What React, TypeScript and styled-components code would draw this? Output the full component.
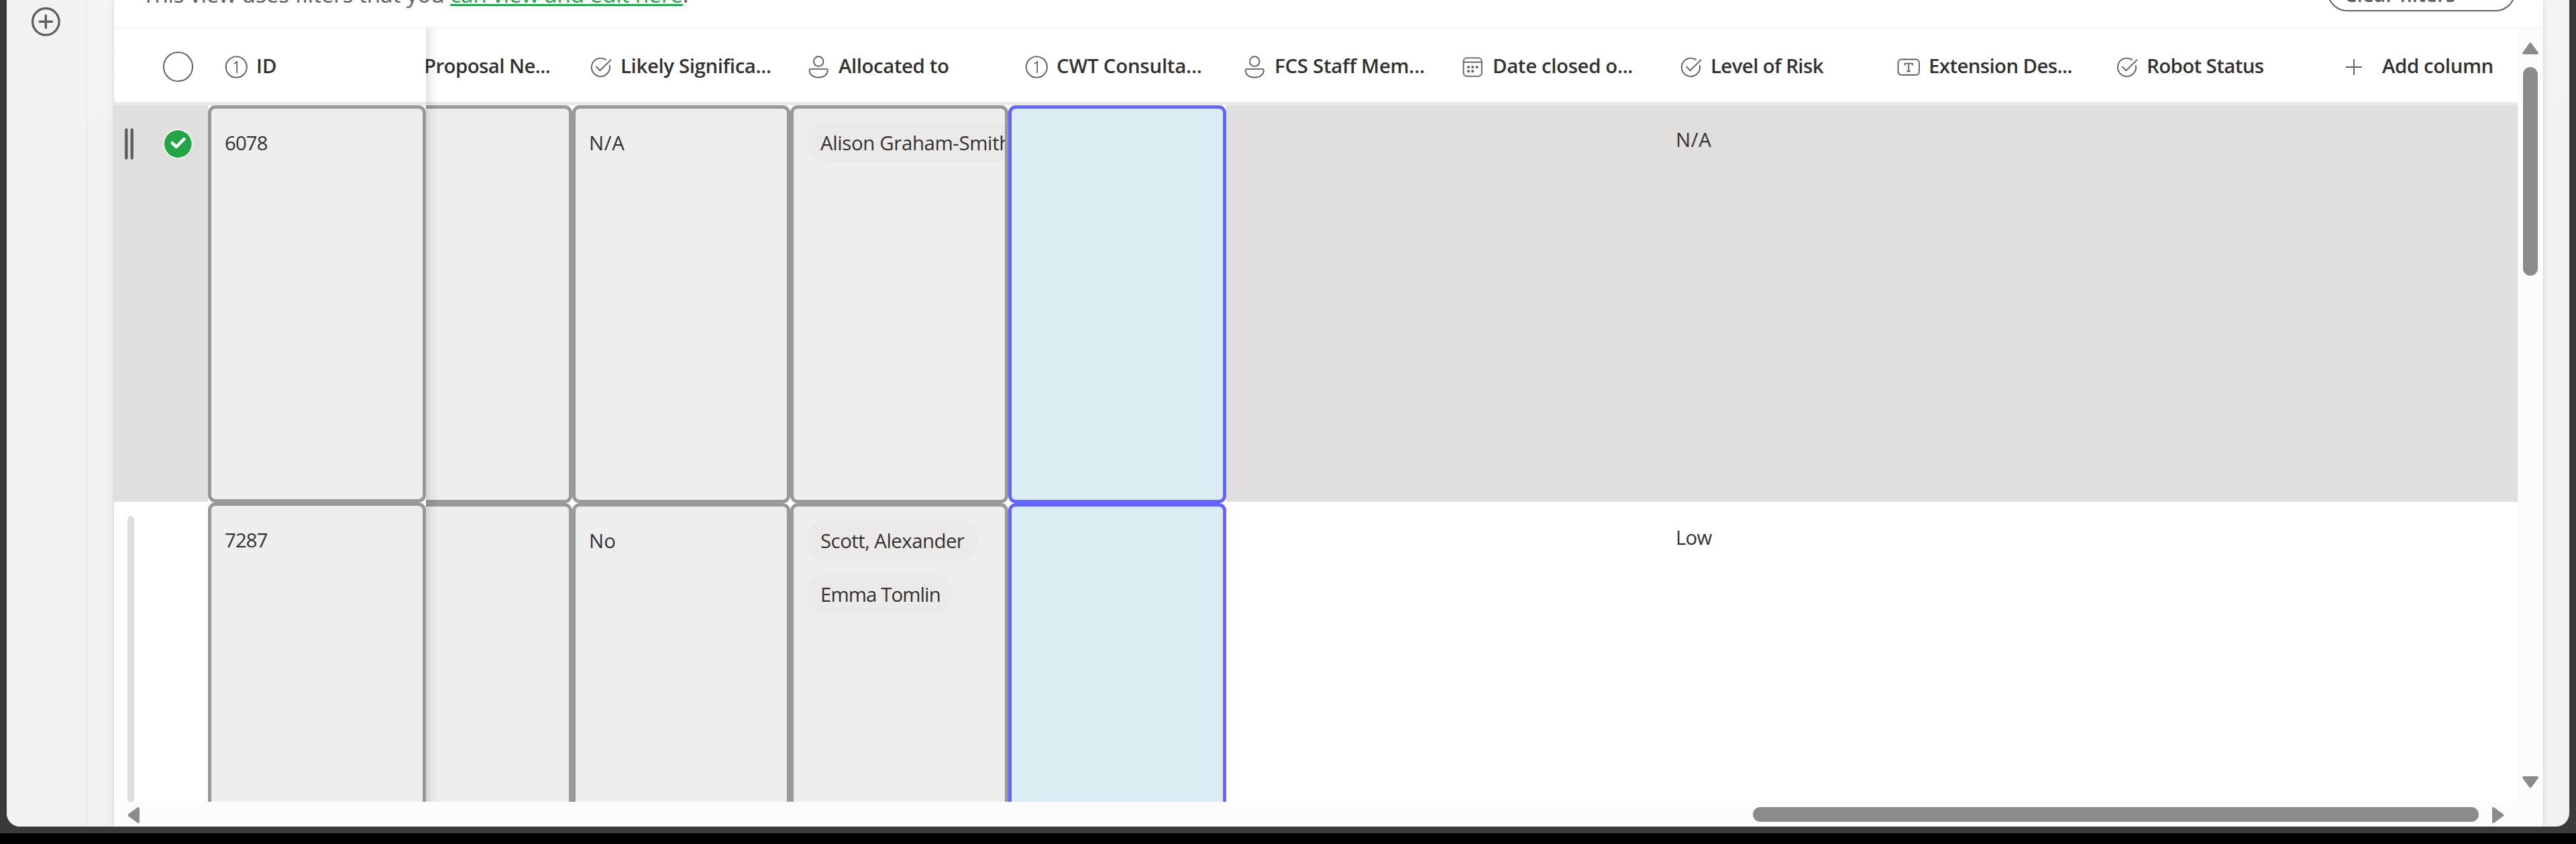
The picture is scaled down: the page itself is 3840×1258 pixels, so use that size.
import React from 'react';
import styled, { createGlobalStyle } from 'styled-components';

const GlobalStyle = createGlobalStyle`
  *, *::before, *::after { box-sizing: border-box; }
  body {
    margin: 0;
    background: #000;
    color: #323130;
    font-family: "Open Sans", "Noto Sans", sans-serif;
    font-size: 29.4px;
    line-height: 40px;
    overflow: hidden;
  }
`;

const Desktop = styled.div`
  height: 1242px;
  padding: 0 10px 10px;
  background: #3b3a39;
`;

const AppWindow = styled.div`
  display: flex;
  height: 1232px;
  overflow: hidden;
  border-radius: 0 0 20px 20px;
  background: linear-gradient(#f5f5f4, #f3f2f1 200px);
`;

const Rail = styled.nav`
  width: 120px;
  flex: none;
  padding: 9px 0 0 35px;
  border-right: 2px solid #edebe9;
  background: #f3f2f1;
  svg { display: block; }
`;

const Sheet = styled.main`
  display: flex;
  flex-direction: column;
  width: 3621px;
  margin-left: 40px;
  background: #fff;
  box-shadow: 0 0 3px rgba(0, 0, 0, 0.16), 0 0 14px rgba(0, 0, 0, 0.07);
`;

const FilterBar = styled.header`
  display: flex;
  justify-content: space-between;
  align-items: flex-end;
  height: 42px;
  padding: 0 41.5px 0 42px;
  border-bottom: 2px solid #f6f6f5;
`;

const FilterNote = styled.p`
  margin: 0 0 26px;
  color: #605e5c;
  font-size: 33.5px;
  line-height: 46px;
  letter-spacing: -0.22px;
  white-space: pre;
`;

const FilterLink = styled.a`
  display: inline-block;
  height: 41px;
  border-bottom: 3px solid #23a447;
  color: #23a447;
  letter-spacing: -0.2px;
`;

const ClearButton = styled.button`
  width: 281px;
  height: 64px;
  margin-bottom: 23px;
  padding: 13px 0 0 24px;
  border: 2.4px solid #605e5c;
  border-radius: 30px;
  background: #fff;
  color: #605e5c;
  font: 600 30px/40px "Open Sans", sans-serif;
  letter-spacing: -0.1px;
  text-align: left;
`;

const Body = styled.div`
  display: flex;
  flex: 1;
  min-height: 0;
`;

const GridArea = styled.div`
  display: flex;
  flex-direction: column;
  width: 3583px;
`;

const Panes = styled.div`
  display: flex;
  height: 1153px;
  overflow: hidden;
`;

const FrozenPane = styled.div`
  width: 465px;
  flex: none;
  z-index: 1;
  background: #fff;
`;

const ScrollPane = styled.div`
  position: relative;
  width: 3118px;
  flex: none;
  overflow: hidden;
  &::before {
    content: "";
    position: absolute;
    z-index: 2;
    inset: 0 auto 0 0;
    width: 18px;
    background: linear-gradient(90deg, rgba(0, 0, 0, 0.11), rgba(0, 0, 0, 0.05) 40%, transparent);
  }
`;

const HeadRow = styled.div`
  display: flex;
  height: 115px;
  border-bottom: 5px solid #eaeaea;
`;

const HeadCell = styled.div<{ $width?: number; $pad?: number; $gap?: number }>`
  display: flex;
  align-items: center;
  gap: ${(p) => p.$gap ?? 12}px;
  width: ${(p) => p.$width ?? 325}px;
  flex: none;
  padding: 5px 0 0 ${(p) => p.$pad ?? 24}px;
  svg { flex: none; }
`;

const HeadLabel = styled.span<{ $track: number }>`
  margin-bottom: 4px;
  color: #323130;
  font-weight: 600;
  letter-spacing: ${(p) => p.$track}px;
  white-space: nowrap;
`;

const ClippedLabel = styled(HeadLabel)`
  margin-left: -3px;
`;

const SelectAll = styled.div`
  display: flex;
  width: 140px;
  flex: none;
  align-items: center;
  padding: 5px 0 0 73px;
`;

const Ring = styled.span`
  width: 44.5px;
  height: 44.5px;
  border: 2px solid #605e5c;
  border-radius: 50%;
`;

const Row = styled.div<{ $selected?: boolean; $frozen?: boolean }>`
  display: flex;
  height: ${(p) => (p.$frozen ? 592 : 593)}px;
  background: ${(p) => (p.$selected ? 'linear-gradient(#e0dfde 591px, #fff 591px)' : '#fff')};
`;

const Handle = styled.div`
  display: flex;
  width: 140px;
  flex: none;
  align-items: flex-start;
  svg { display: block; }
`;

const HandleTrack = styled.div`
  width: 10px;
  height: 600px;
  margin: 20px 0 0 20px;
  border-radius: 5px;
  background: #e0dfde;
`;

const CellSlot = styled.div<{ $width?: number }>`
  display: flex;
  width: ${(p) => p.$width ?? 325}px;
  flex: none;
  background: #fff;
`;

type Tone = 'grey' | 'blue';

const BoxCell = styled.div<{ $tone?: Tone; $square?: boolean }>`
  flex: 1;
  min-width: 0;
  overflow: hidden;
  padding: 31px 0 0 20px;
  border: 5px solid ${(p) => (p.$tone === 'blue' ? '#6464ff' : '#999')};
  border-left-width: ${(p) => (p.$square ? 0 : 5)}px;
  border-radius: ${(p) => (p.$square ? '0 11px 11px 0' : '11px')};
  background: ${(p) => (p.$tone === 'blue' ? '#dcecf3' : '#eee')};
`;

const PeopleCell = styled(BoxCell)`
  display: flex;
  flex-direction: column;
  align-items: flex-start;
  gap: 20px;
  padding: 20px 0 0 20px;
`;

const PlainCell = styled.div<{ $width?: number }>`
  width: ${(p) => p.$width ?? 325}px;
  flex: none;
  padding: 31px 0 0 20px;
`;

const Value = styled.span<{ $track?: number }>`
  letter-spacing: ${(p) => p.$track ?? 0}px;
  white-space: nowrap;
`;

const Chip = styled.span<{ $track: number; $width: number }>`
  width: ${(p) => p.$width}px;
  height: 60px;
  flex: none;
  padding: 11px 0 0 20px;
  border-radius: 28px;
  background: #ebeae9;
  letter-spacing: ${(p) => p.$track}px;
  white-space: nowrap;
`;

const HScroll = styled.div`
  display: flex;
  align-items: flex-start;
  height: 37px;
  padding: 8px 20px 0;
  background: #fcfcfc;
`;

const HThumb = styled.div`
  width: 1082px;
  height: 22px;
  margin: 0 20px 0 2405px;
  border-radius: 11px;
  background: #8b8b8b;
`;

const VScroll = styled.div`
  display: flex;
  flex-direction: column;
  align-items: center;
  width: 38px;
  padding-top: 21px;
  background: #fcfcfc;
  svg { display: block; flex: none; }
`;

const VThumb = styled.div`
  width: 22px;
  height: 311px;
  margin: 19px 0 746px;
  border-radius: 11px;
  background: #8b8b8b;
`;

const INK = '#605e5c';

type IconName = 'number' | 'choice' | 'person' | 'date' | 'text' | 'plus';

function ColumnIcon({ name }: { name: IconName }) {
  return (
    <svg width="36" height="36" viewBox="0 0 36 36" fill="none" stroke={INK} strokeWidth="1.9">
      {name === 'number' && (
        <>
          <circle cx="18.3" cy="18" r="15.6" />
          <path d="M14.6 13.2c2.6-.8 3.8-2 4.6-3.9V27" strokeWidth="1.7" />
        </>
      )}
      {name === 'choice' && (
        <>
          <path d="M26.8 7.6A13.6 13.6 0 1 0 31.6 15" />
          <path d="M11.4 16.8l6 6.4L34.2 6.6" />
        </>
      )}
      {name === 'person' && (
        <>
          <circle cx="18.2" cy="9.6" r="7.3" />
          <path d="M6.8 20.9h22.8c1.4 0 2.2.9 2.2 2.2 0 6-5.6 10.4-13.6 10.4S4.6 29.1 4.6 23.1c0-1.3.8-2.2 2.2-2.2z" />
        </>
      )}
      {name === 'date' && (
        <>
          <rect x="4.6" y="4.4" width="27.2" height="27.2" rx="5" />
          <path d="M4.6 10.6h27.2" />
          <g fill={INK} stroke="none">
            <circle cx="12" cy="18" r="2" />
            <circle cx="18.2" cy="18" r="2" />
            <circle cx="24.5" cy="18" r="2" />
            <circle cx="12" cy="24.3" r="2" />
            <circle cx="18.2" cy="24.3" r="2" />
          </g>
        </>
      )}
      {name === 'text' && (
        <>
          <rect x="2.5" y="6.5" width="31.4" height="23.2" rx="5" />
          <path d="M12.6 15.6v-3h11.2v3M18.2 12.6v11.6M15.4 24.2h5.6" />
        </>
      )}
      {name === 'plus' && <path d="M18 6v24M6 18h24" strokeWidth="1.8" />}
    </svg>
  );
}

type Dir = 'up' | 'down' | 'left' | 'right';
const TURN: Record<Dir, string> = {
  up: 'M12 3L21.5 16H2.5z',
  down: 'M12 15L21.5 2H2.5z',
  left: 'M3 12L16 2.5V21.5z',
  right: 'M15 12L2 2.5V21.5z',
};

function Arrow({ dir }: { dir: Dir }) {
  const vertical = dir === 'up' || dir === 'down';
  const w = vertical ? 24 : 18;
  const h = vertical ? 18 : 24;
  return (
    <svg width={w} height={h} viewBox={`0 0 ${w} ${h}`}>
      <path d={TURN[dir]} fill="#8b8b8b" stroke="#8b8b8b" strokeWidth="4.5" strokeLinejoin="round" />
    </svg>
  );
}

const COLUMNS: { icon: IconName; label: string; track: number }[] = [
  { icon: 'choice', label: 'Likely Significa...', track: -0.37 },
  { icon: 'person', label: 'Allocated to', track: -0.42 },
  { icon: 'number', label: 'CWT Consulta...', track: -0.22 },
  { icon: 'person', label: 'FCS Staff Mem...', track: -0.27 },
  { icon: 'date', label: 'Date closed o...', track: -0.36 },
  { icon: 'choice', label: 'Level of Risk', track: -0.6 },
  { icon: 'text', label: 'Extension Des...', track: -0.6 },
  { icon: 'choice', label: 'Robot Status', track: -0.6 },
];

interface Person { name: string; track: number; width: number }
interface Item {
  id: string;
  selected?: boolean;
  effect: string;
  effectTrack: number;
  people: Person[];
  risk: string;
  riskTrack: number;
}

const ITEMS: Item[] = [
  {
    id: '6078', selected: true, effect: 'N/A', effectTrack: 0.7,
    people: [{ name: 'Alison Graham-Smith', track: -0.36, width: 325 }],
    risk: 'N/A', riskTrack: 0.7,
  },
  {
    id: '7287', effect: 'No', effectTrack: 0,
    people: [
      { name: 'Scott, Alexander', track: -0.53, width: 255 },
      { name: 'Emma Tomlin', track: -0.9, width: 217 },
    ],
    risk: 'Low', riskTrack: -0.8,
  },
];

function SelectedHandle() {
  return (
    <svg width="140" height="120" viewBox="0 0 140 120">
      <path d="M18.3 36.5v42M26.7 36.5v42" stroke={INK} strokeWidth="4.4" strokeLinecap="round" />
      <circle cx="95.3" cy="57.5" r="22" fill="#fff" />
      <circle cx="95.3" cy="57.5" r="20.4" fill="#23a447" />
      <path d="M86.8 56.2l6 5.8L104.3 50.4" fill="none" stroke="#fff" strokeWidth="4.6" strokeLinecap="round" strokeLinejoin="round" />
    </svg>
  );
}

export default function App() {
  return (
    <>
      <GlobalStyle />
      <Desktop>
        <AppWindow>
          <Rail>
            <svg width="46" height="46" viewBox="0 0 46 46" fill="none" stroke={INK} strokeLinecap="round">
              <circle cx="23.3" cy="23.3" r="19.8" strokeWidth="3.3" />
              <path d="M23.3 14.2v18.2M14.2 23.3h18.2" strokeWidth="3.5" />
            </svg>
          </Rail>
          <Sheet>
            <FilterBar>
              <FilterNote>
                {'This view uses filters that you '}
                <FilterLink>can view and edit here</FilterLink>.
              </FilterNote>
              <ClearButton>Clear filters</ClearButton>
            </FilterBar>
            <Body>
              <GridArea>
                <Panes>
                  <FrozenPane>
                    <HeadRow>
                      <SelectAll><Ring /></SelectAll>
                      <HeadCell>
                        <ColumnIcon name="number" />
                        <HeadLabel $track={0}>ID</HeadLabel>
                      </HeadCell>
                    </HeadRow>
                    {ITEMS.map((item) => (
                      <Row key={item.id} $selected={item.selected} $frozen>
                        <Handle>{item.selected ? <SelectedHandle /> : <HandleTrack />}</Handle>
                        <CellSlot>
                          <BoxCell><Value $track={-0.9}>{item.id}</Value></BoxCell>
                        </CellSlot>
                      </Row>
                    ))}
                  </FrozenPane>
                  <ScrollPane>
                    <HeadRow>
                      <HeadCell $width={218} $pad={0}>
                        <ClippedLabel $track={-0.57}>Proposal Ne...</ClippedLabel>
                      </HeadCell>
                      {COLUMNS.map((c) => (
                        <HeadCell key={c.label}>
                          <ColumnIcon name={c.icon} />
                          <HeadLabel $track={c.track}>{c.label}</HeadLabel>
                        </HeadCell>
                      ))}
                      <HeadCell $width={300} $pad={38} $gap={24}>
                        <ColumnIcon name="plus" />
                        <HeadLabel $track={-0.39}>Add column</HeadLabel>
                      </HeadCell>
                    </HeadRow>
                    {ITEMS.map((item) => (
                      <Row key={item.id} $selected={item.selected}>
                        <CellSlot $width={218}><BoxCell $square /></CellSlot>
                        <CellSlot>
                          <BoxCell><Value $track={item.effectTrack}>{item.effect}</Value></BoxCell>
                        </CellSlot>
                        <CellSlot>
                          <PeopleCell>
                            {item.people.map((p) => (
                              <Chip key={p.name} $track={p.track} $width={p.width}>{p.name}</Chip>
                            ))}
                          </PeopleCell>
                        </CellSlot>
                        <CellSlot><BoxCell $tone="blue" /></CellSlot>
                        <PlainCell $width={650} />
                        <PlainCell><Value $track={item.riskTrack}>{item.risk}</Value></PlainCell>
                      </Row>
                    ))}
                  </ScrollPane>
                </Panes>
                <HScroll>
                  <Arrow dir="left" />
                  <HThumb />
                  <Arrow dir="right" />
                </HScroll>
              </GridArea>
              <VScroll>
                <Arrow dir="up" />
                <VThumb />
                <Arrow dir="down" />
              </VScroll>
            </Body>
          </Sheet>
        </AppWindow>
      </Desktop>
    </>
  );
}
